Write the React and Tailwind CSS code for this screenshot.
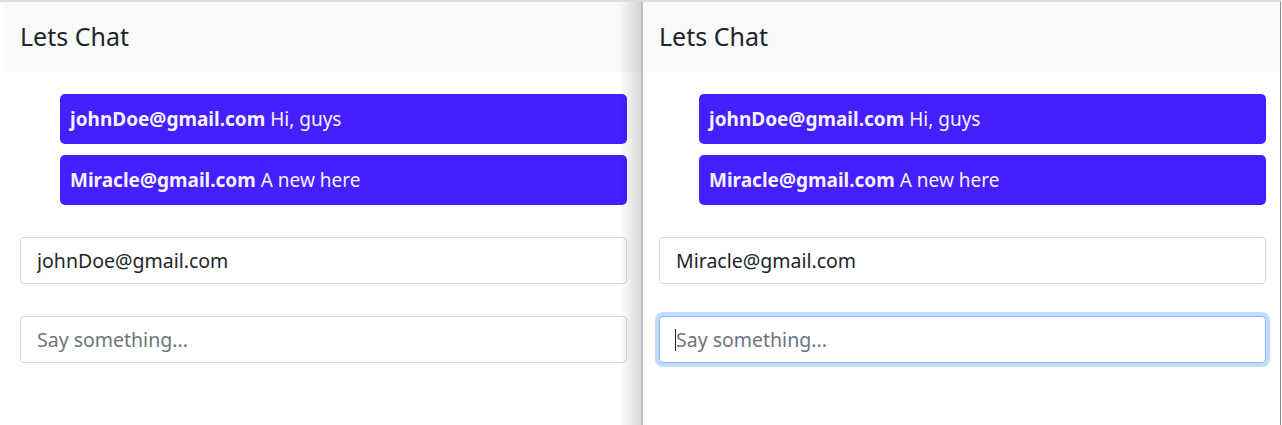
import React from 'react';

const messages = [
  { user: 'johnDoe@gmail.com', text: 'Hi, guys' },
  { user: 'Miracle@gmail.com', text: 'A new here' },
];

const ChatWindow = ({ user, focused }) => {
  return (
    <div className="flex flex-col h-full">
      {/* header */}
      <div className="h-[70px] flex items-center px-4 bg-[#f8f9fa]">
        <h1 className="text-[25px] text-[#212529]">Lets Chat</h1>
      </div>

      {/* messages */}
      <div className="flex flex-col gap-[11px] mt-[22px] pl-[56px] pr-[14px]">
        {messages.map((m) => (
          <div
            key={m.user}
            className="h-[50px] flex items-center px-[10px] rounded-[5px] bg-[#451fff] text-[#f4f2ff] text-[19px]"
          >
            <span className="font-bold">{m.user}</span>
            <span className="ml-[5px]">{m.text}</span>
          </div>
        ))}
      </div>

      {/* form */}
      <div className="flex flex-col gap-[32px] mt-[32px] pl-[16px] pr-[14px]">
        <input
          readOnly
          value={user}
          className="h-[47px] w-full px-[16px] text-[19.5px] text-[#212529] bg-white border border-[#d6d9dd] rounded-[4px] outline-none"
        />
        <div className="relative">
          <input
            readOnly
            placeholder="Say something..."
            className={
              focused
                ? 'h-[47px] w-full px-[16px] text-[19.5px] text-[#212529] placeholder:text-[#6c757d] bg-white border border-[#86b7fe] rounded-[4px] outline-none ring-4 ring-[#0d6efd]/25'
                : 'h-[47px] w-full px-[16px] text-[19.5px] text-[#212529] placeholder:text-[#6c757d] bg-white border border-[#d6d9dd] rounded-[4px] outline-none'
            }
          />
          {focused && (
            <span className="absolute left-[16px] top-[13px] w-px h-[22px] bg-[#212529]" />
          )}
        </div>
      </div>
    </div>
  );
};

export default function App() {
  return (
    <div
      className="flex h-[425px] w-[1282px] bg-white border-t-2 border-[#dedede] overflow-hidden"
      style={{ fontFamily: '"Noto Sans", "Open Sans", sans-serif' }}
    >
      <div className="relative w-[641px] pl-[4px] shrink-0">
        <ChatWindow user="johnDoe@gmail.com" />
        {/* window shadow */}
        <div className="pointer-events-none absolute top-0 right-0 h-full w-[22px] bg-gradient-to-r from-black/0 to-black/15" />
      </div>
      <div className="w-[2px] bg-[#bdbdbd] shrink-0" />
      <div className="w-[638px] shrink-0 border-r border-[#8a8a8a]">
        <ChatWindow user="Miracle@gmail.com" focused />
      </div>
    </div>
  );
}
